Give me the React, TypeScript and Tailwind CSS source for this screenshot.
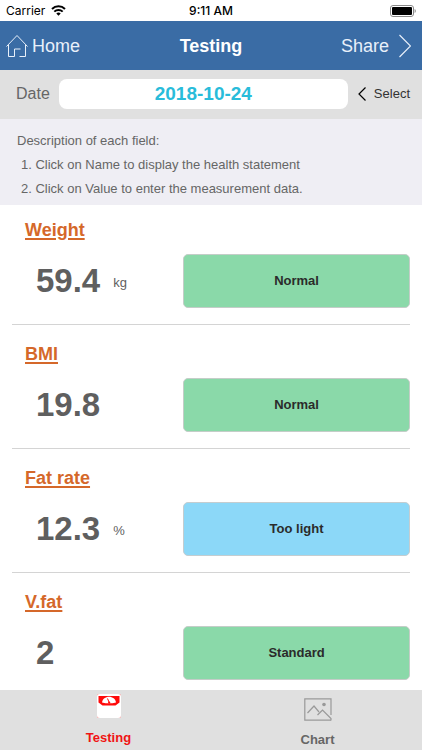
interface Measurement {
    name: string;
    value: string;
    unit?: string;
    status: string;
    low?: boolean;
}

const measurements: Measurement[] = [
    { name: "Weight", value: "59.4", unit: "kg", status: "Normal" },
    { name: "BMI", value: "19.8", status: "Normal" },
    { name: "Fat rate", value: "12.3", unit: "%", status: "Too light", low: true },
    { name: "V.fat", value: "2", status: "Standard" },
];

const StatusBar = () => (
    <div className="grid h-[21px] grid-cols-3 items-center bg-white px-[6px] font-[Inter,sans-serif] text-xs text-black">
        <div className="flex items-center gap-[6px]">
            <span>Carrier</span>
            <svg width="15" height="11" viewBox="0 0 15 11" fill="none" stroke="black" strokeWidth="2">
                <path d="M1 4a9.2 9.2 0 0 1 13 0" />
                <path d="M3.3 6.6a6 6 0 0 1 8.4 0" />
                <path d="M7.5 10.8 5.3 8.5a3.1 3.1 0 0 1 4.4 0z" fill="black" stroke="none" />
            </svg>
        </div>
        <span className="text-center font-medium">9:11 AM</span>
        <svg className="justify-self-end" width="26" height="12" viewBox="0 0 26 12">
            <rect x="0.5" y="0.5" width="23" height="11" rx="2.5" fill="none" stroke="#8a8a8a" />
            <rect x="2" y="2" width="20" height="8" rx="1" fill="black" />
            <path d="M24.6 4v4c.7-.3 1.2-1 1.2-2s-.5-1.700-1.200-2z" fill="#8a8a8a" />
        </svg>
    </div>
);

const Header = () => (
    <header className="grid h-[49px] grid-cols-3 items-center bg-[#3a6ca5] px-[6px] text-lg text-white">
        <button type="button" className="flex items-center gap-1 text-[#e8f0fa]">
            <svg width="22" height="24" viewBox="0 0 22 24" fill="none" stroke="currentColor">
                <path d="M0.500 12.500 11 1.500l10.500 11" />
                <path d="M2.500 11v11.500h6v-7.500h6" />
                <path d="M19.500 11v11.500h-6" />
            </svg>
            Home
        </button>
        <h1 className="text-center font-bold">Testing</h1>
        <button type="button" className="flex items-center justify-end gap-[10px] pr-[5px] text-[#e8f0fa]">
            Share
            <svg width="12" height="24" viewBox="0 0 12 24" fill="none" stroke="currentColor" strokeWidth="1.2">
                <path d="M0.500 1 11.500 12l-11 11" />
            </svg>
        </button>
    </header>
);

const DateBar = () => (
    <div className="flex h-[49px] items-center bg-[#e0e0e0] pr-3 pb-[2px] pl-4">
        <label htmlFor="date" className="text-base text-[#666]">
            Date
        </label>
        <input
            id="date"
            type="text"
            defaultValue="2018-10-24"
            className="ml-[9px] h-[30px] min-w-0 flex-1 rounded-lg bg-white text-center text-[19px] font-bold text-[#29bcda]"
        />
        <button type="button" className="ml-[10px] flex items-center gap-2 text-[13px] text-[#333]">
            <svg width="8" height="14" viewBox="0 0 8 14" fill="none" stroke="black" strokeWidth="1.2">
                <path d="M7.500 0.500 1 7l6.500 6.500" />
            </svg>
            Select
        </button>
    </div>
);

const Description = () => (
    <section className="bg-[#efeef4] pt-[10px] pb-1 pl-[17px] text-[13px] leading-6 text-[#666]">
        <p>Description of each field:</p>
        <ol className="pl-1">
            <li>1. Click on Name to display the health statement</li>
            <li>2. Click on Value to enter the measurement data.</li>
        </ol>
    </section>
);

const MeasurementRow = ({ item }: { item: Measurement }) => (
    <li className="border-b border-[#d4d4d4] pt-[17px] pb-4 first:pt-[13px] last:border-b-0 last:pb-[10px]">
        <a
            href="#statement"
            className="ml-[13px] block w-fit text-lg leading-6 font-bold text-[#d5682a] underline decoration-2 underline-offset-2"
        >
            {item.name}
        </a>
        <div className="mt-3 flex h-[54px] items-center">
            <button type="button" className="flex w-[43%] items-center gap-[13px] pl-6 text-[#5f5f5f]">
                <span className="text-[33px] leading-10 font-bold">{item.value}</span>
                {item.unit && <span className="pt-1 text-[13px]">{item.unit}</span>}
            </button>
            <button
                type="button"
                className={
                    item.low
                        ? "h-full w-[57%] rounded-[5px] border border-[#c4cdd0] bg-[#8cd8f8] text-[13px] font-bold text-[#2b2b2b]"
                        : "h-full w-[57%] rounded-[5px] border border-[#c4cdc8] bg-[#8ad9a9] text-[13px] font-bold text-[#2b2b2b]"
                }
            >
                {item.status}
            </button>
        </div>
    </li>
);

const TabBar = () => (
    <nav className="sticky bottom-0 mt-auto grid h-[60px] grid-cols-2 bg-[#e0e0e0] pl-1 text-[13px] leading-4 font-bold">
        <button type="button" className="flex flex-col items-center justify-between pt-1 pb-1 text-[#f01414]">
            <svg width="24" height="24" viewBox="0 0 24 24">
                <rect width="24" height="24" rx="1" fill="#f9b0b0" />
                <rect width="24" height="24" rx="3" fill="white" />
                <path d="M1.500 2h21v6.500l-4 3h-13l-4-3z" fill="#ff0a0a" />
                <path d="M5 8.500C5.500 5 8.500 2.800 12 2.800S18.500 5 19 8.500l-3.500.8h-7z" fill="white" />
                <path d="m10.500 4.500 1.700 4" stroke="#ff0a0a" strokeWidth="1" />
                <circle cx="12.200" cy="8.600" r="1.100" fill="#ff0a0a" />
            </svg>
            Testing
        </button>
        <button type="button" className="flex flex-col items-center justify-between pt-2 pb-[2px] text-[#666]">
            <svg width="28" height="23" viewBox="0 0 28 23" fill="none" stroke="#999" strokeWidth="1.200">
                <path d="M27 17V.8H.8v21.400H27" />
                <path d="m3.500 15 6.500-7 5 6M13.500 17l5-5L27 20.500v2" />
                <circle cx="20" cy="6.500" r="1.800" fill="#999" stroke="none" />
            </svg>
            Chart
        </button>
    </nav>
);

export default function App() {
    return (
        <div className="flex min-h-screen flex-col bg-white font-['Liberation_Sans',Arial,sans-serif]">
            <StatusBar />
            <Header />
            <DateBar />
            <Description />
            <ul className="px-3">
                {measurements.map((item) => (
                    <MeasurementRow key={item.name} item={item} />
                ))}
            </ul>
            <TabBar />
        </div>
    );
}
